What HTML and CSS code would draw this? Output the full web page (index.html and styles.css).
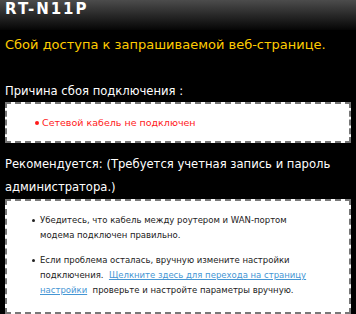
FILE: index.html
```html
<!DOCTYPE html>
<html lang="ru">
  <head>
    <meta charset="utf-8">
    <title>RT-N11P</title>
    <link rel="stylesheet" href="styles.css">
  </head>
  <body>
    <div class="top">RT-N11P</div>
    <div class="main">
      <p class="err">Сбой доступа к запрашиваемой веб-странице.</p>
      <p class="title reason">Причина сбоя подключения :</p>
      <div class="box">
        <ul class="red">
          <li>Сетевой кабель не подключен</li>
        </ul>
      </div>
      <p class="title">Рекомендуется: (Требуется учетная запись и пароль администратора.)</p>
      <div class="box">
        <ul class="tips">
          <li>Убедитесь, что кабель между роутером и WAN-портом<br>модема подключен правильно.</li>
          <li>Если проблема осталась, вручную измените настройки подключения. &nbsp;<a href="#">Щелкните здесь для перехода на страницу настройки</a> &nbsp;проверьте и настройте параметры вручную.</li>
        </ul>
      </div>
    </div>
  </body>
</html>
```

FILE: styles.css
```css
html,body,div,p,ul,li{
  margin:0;
  padding:0;
}
body{
  background:#000;
  font-family:"DejaVu Sans",Verdana,sans-serif;
  color:#fff;
}
.top{
  height:30px;
  padding-left:5px;
  line-height:19px;
  font-size:15px;
  font-weight:bold;
  letter-spacing:2px;
  background:linear-gradient(#4c4c4c,#050505);
}
.main{
  padding:0 5px;
}
.err{
  margin-top:7px;
  font-size:13px;
  line-height:16px;
  color:#ffcc00;
}
.title{
  margin-top:10px;
  font-size:11.6px;
  line-height:23px;
}
.reason{
  margin-top:28px;
  line-height:21px;
}
.box{
  background:#fff;
  border:2px dashed #777;
}
ul{
  list-style:none;
}
.red{
  padding:12px 0 11px 35px;
  font-size:9.5px;
  line-height:14px;
  color:#ff1a1a;
}
.red li::before{
  content:"";
  display:inline-block;
  width:4px;
  height:4px;
  margin:0 3px 1px -7px;
  border-radius:50%;
  background:#ff1a1a;
}
.tips{
  padding:12px 16px 14px 33px;
  font-size:8.5px;
  line-height:15px;
  color:#222;
}
.tips li{
  margin-bottom:10px;
}
.tips li:last-child{
  margin-bottom:0;
}
.tips li::before{
  content:"";
  display:inline-block;
  width:3px;
  height:3px;
  margin:0 5px 1px -8px;
  border-radius:50%;
  background:#222;
}
.tips a{
  color:#4596d4;
}
```
